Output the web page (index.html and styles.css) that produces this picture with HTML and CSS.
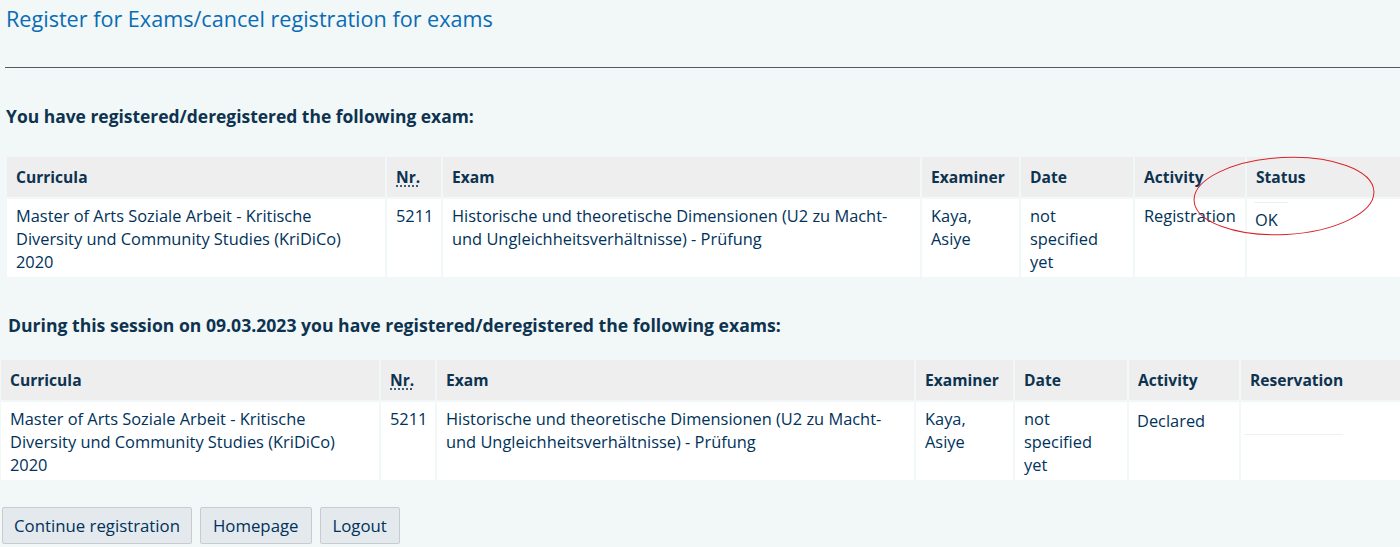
FILE: index.html
```html
<!DOCTYPE html>
<html lang="en">
<head>
<meta charset="utf-8">
<title>Register for Exams</title>
<link rel="stylesheet" href="styles.css">
</head>
<body>
<div class="page">
  <h1 class="title">Register for Exams/cancel registration for exams</h1>
  <hr class="rule">
  <h2 class="section-head first">You have registered/deregistered the following exam:</h2>
  <div class="table-wrap one">
    <table class="exams">
      <colgroup>
        <col class="c-cur"><col class="c-nr"><col class="c-exam"><col class="c-examiner"><col class="c-date"><col class="c-act"><col class="c-last">
      </colgroup>
      <thead>
        <tr><th>Curricula</th><th><abbr title="Number">Nr.</abbr></th><th>Exam</th><th>Examiner</th><th>Date</th><th>Activity</th><th>Status</th></tr>
      </thead>
      <tbody>
        <tr>
          <td>Master of Arts Soziale Arbeit - Kritische Diversity und Community Studies (KriDiCo) 2020</td>
          <td>5211</td>
          <td>Historische und theoretische Dimensionen (U2 zu Macht- und Ungleichheitsverhältnisse) - Prüfung</td>
          <td>Kaya, Asiye</td>
          <td>not specified yet</td>
          <td>Registration</td>
          <td class="status"><div class="mini-line"></div><div class="ok">OK</div></td>
        </tr>
      </tbody>
    </table>
    <svg class="mark" width="184" height="82" viewBox="0 0 184 82" aria-hidden="true">
      <ellipse cx="92" cy="41" rx="90" ry="38.5" fill="none" stroke="#d8222a" stroke-width="1" transform="rotate(-3 92 41)"/>
    </svg>
  </div>

  <h2 class="section-head second">During this session on 09.03.2023 you have registered/deregistered the following exams:</h2>
  <div class="table-wrap two">
    <table class="exams">
      <colgroup>
        <col class="c-cur"><col class="c-nr"><col class="c-exam"><col class="c-examiner"><col class="c-date"><col class="c-act"><col class="c-last">
      </colgroup>
      <thead>
        <tr><th>Curricula</th><th><abbr title="Number">Nr.</abbr></th><th>Exam</th><th>Examiner</th><th>Date</th><th>Activity</th><th class="reserv-head">Reservation</th></tr>
      </thead>
      <tbody>
        <tr>
          <td>Master of Arts Soziale Arbeit - Kritische Diversity und Community Studies (KriDiCo) 2020</td>
          <td>5211</td>
          <td>Historische und theoretische Dimensionen (U2 zu Macht- und Ungleichheitsverhältnisse) - Prüfung</td>
          <td>Kaya, Asiye</td>
          <td>not specified yet</td>
          <td class="declared">Declared</td>
          <td class="reserv"><div class="reserv-box"></div></td>
        </tr>
      </tbody>
    </table>
  </div>

  <div class="buttons">
    <button class="btn">Continue registration</button>
    <button class="btn wide">Homepage</button>
    <button class="btn wide">Logout</button>
  </div>
</div>
</body>
</html>
```

FILE: styles.css
```css
html, body {
  margin: 0;
  padding: 0;
  overflow: hidden;
  background: #f2f7f7;
}
body {
  font-family: "Open Sans", "Liberation Sans", sans-serif;
  font-size: 16.4px;
  color: #00325a;
}
.page {
  width: 1400px;
}
.title {
  margin: 0;
  padding: 5px 0 0 6px;
  font-size: 21.6px;
  font-weight: 400;
  line-height: 28px;
  color: #0a6cb4;
}
.rule {
  margin: 34px 0 0 5px;
  border: 0;
  border-top: 1px solid #555a5e;
  height: 0;
}
.section-head {
  margin: 0;
  font-size: 17.5px;
  font-weight: 700;
  line-height: 24px;
  color: #0d3350;
}
.section-head.first {
  margin-top: 36px;
  padding-left: 6px;
  font-size: 17.45px;
}
.section-head.second {
  margin-top: 34px;
  padding-left: 8px;
  font-size: 17.6px;
}
.table-wrap {
  position: relative;
}
.table-wrap.one {
  margin-top: 27px;
  padding-left: 5px;
}
.table-wrap.two {
  margin-top: 21px;
  margin-left: -1px;
}
.exams {
  border-collapse: separate;
  border-spacing: 2px;
  table-layout: fixed;
  width: 1404px;
}
.c-cur { width: 378px; }
.c-nr { width: 54px; }
.c-exam { width: 477px; }
.c-examiner { width: 97px; }
.c-date { width: 112px; }
.c-act { width: 110px; }
.c-last { width: 160px; }
.exams th {
  background: #eeeeee;
  height: 40px;
  padding: 0 10px 0 9px;
  text-align: left;
  font-weight: 700;
  font-size: 15.6px;
  color: #0d3350;
  box-sizing: border-box;
}
.exams th abbr {
  text-decoration: underline dotted;
  text-underline-offset: 3px;
}
.exams td {
  background: #ffffff;
  vertical-align: top;
  padding: 5px 10px 4px 9px;
  line-height: 23px;
  height: 78px;
  box-sizing: border-box;
}
.exams td.status {
  padding: 3px 8px 0 7px;
}
.mini-line {
  width: 34px;
  border-top: 1px solid #eceff0;
  height: 0;
}
.ok {
  padding-top: 5px;
  padding-left: 1px;
  line-height: 23px;
}
.two .exams td.declared {
  padding-top: 7px;
  padding-left: 8px;
}
.two .exams td.reserv {
  padding: 0 10px 0 3px;
}
.reserv-box {
  width: 99px;
  height: 32px;
  border-bottom: 1px solid #eef1f2;
}
.mark {
  position: absolute;
  left: 1192px;
  top: 0px;
}
.buttons {
  display: flex;
  gap: 8px;
  margin-top: 25px;
  padding-left: 2px;
}
.btn {
  font-family: "Open Sans", "Liberation Sans", sans-serif;
  font-size: 16.8px;
  color: #00325a;
  background: #e4e9ed;
  border: 1px solid #c9cccf;
  border-radius: 2px;
  height: 37px;
  padding: 0 11px;
  line-height: 35px;
}
.btn.wide {
  padding: 0 12px;
}
```
